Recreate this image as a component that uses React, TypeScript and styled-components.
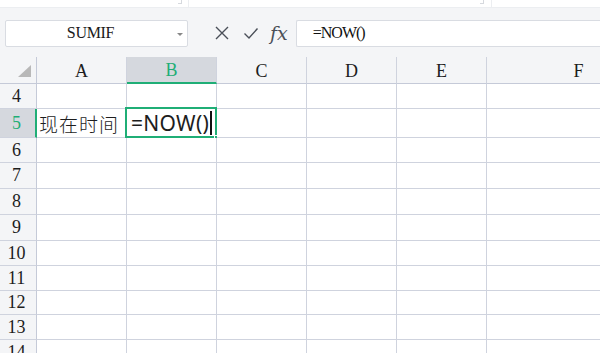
import styled, { createGlobalStyle, css } from 'styled-components';

const GREEN = '#1fae76';
const GRID = '#cfd3de';
const HEAD_BG = '#f4f5f7';
const HEAD_SEL = '#d5d8de';

const columns = ['A', 'B', 'C', 'D', 'E', 'F'];
const rows: { n: number; h: number }[] = [
  { n: 4, h: 25 },
  { n: 5, h: 29 },
  { n: 6, h: 25 },
  { n: 7, h: 26 },
  { n: 8, h: 26 },
  { n: 9, h: 26 },
  { n: 10, h: 25 },
  { n: 11, h: 25 },
  { n: 12, h: 24 },
  { n: 13, h: 25 },
  { n: 14, h: 25 },
];

const GlobalStyle = createGlobalStyle`
  html, body {
    margin: 0;
    padding: 0;
    background: #fff;
    overflow: hidden;
  }
  * { box-sizing: border-box; }
`;

const App = () => {
  return (
    <Page>
      <GlobalStyle />
      <TopStrip>
        <StripMark style={{ left: 178 }} />
        <StripLine style={{ left: 188 }} />
        <StripMark style={{ left: 480 }} />
        <StripLine style={{ left: 491 }} />
      </TopStrip>
      <Toolbar>
        <NameBox>
          <span>SUMIF</span>
          <Caret />
        </NameBox>
        <Tools>
          <svg width="16" height="16" viewBox="0 0 16 16">
            <path d="M2 2 L14 14 M14 2 L2 14" stroke="#4a4f58" strokeWidth="1.4" fill="none" />
          </svg>
          <svg width="16" height="16" viewBox="0 0 16 16">
            <path d="M1.5 8.5 L6 13 L14.5 3.5" stroke="#4a4f58" strokeWidth="1.4" fill="none" />
          </svg>
          <Fx>
            <i>f</i>
            <i>x</i>
          </Fx>
        </Tools>
        <FormulaInput>=NOW()</FormulaInput>
      </Toolbar>
      <Sheet>
        <Corner>
          <Triangle />
        </Corner>
        {columns.map((c) => (
          <ColHead key={c} $active={c === 'B'}>
            {c}
          </ColHead>
        ))}
        {rows.map((r) => (
          <Row key={r.n} $h={r.h}>
            <RowHead $active={r.n === 5}>{r.n}</RowHead>
            {columns.map((c) => (
              <Cell key={c}>
                {r.n === 5 && c === 'A' && <CnText>现在时间</CnText>}
                {r.n === 5 && c === 'B' && (
                  <>
                    <EditText>
                      =NOW()
                      <Cursor />
                    </EditText>
                    <Selection>
                      <Handle />
                    </Selection>
                  </>
                )}
              </Cell>
            ))}
          </Row>
        ))}
      </Sheet>
    </Page>
  );
};

export default App;

const Page = styled.div`
  width: 600px;
  height: 353px;
  overflow: hidden;
  background: #fff;
`;

const TopStrip = styled.div`
  position: relative;
  height: 8px;
  background: #fff;
  border-bottom: 1px solid #eceef1;
`;

const StripMark = styled.div`
  position: absolute;
  top: 0;
  width: 4px;
  height: 4px;
  border-right: 1px solid #d6d9de;
  border-bottom: 1px solid #d6d9de;
`;

const StripLine = styled.div`
  position: absolute;
  top: 0;
  width: 1px;
  height: 7px;
  background: #eceef1;
`;

const Toolbar = styled.div`
  display: flex;
  align-items: center;
  height: 49px;
  padding: 0 0 0 5px;
  background: ${HEAD_BG};
`;

const NameBox = styled.div`
  position: relative;
  display: flex;
  align-items: center;
  justify-content: center;
  width: 183px;
  height: 27px;
  margin-top: 1px;
  padding-right: 12px;
  background: #fff;
  border: 1px solid #d9dce2;
  border-radius: 2px;
  font-family: 'Liberation Serif', serif;
  font-size: 16px;
  letter-spacing: -0.3px;
  color: #1a1a1a;
`;

const Caret = styled.div`
  position: absolute;
  right: 4px;
  top: 12px;
  width: 0;
  height: 0;
  border-left: 3px solid transparent;
  border-right: 3px solid transparent;
  border-top: 3px solid #888;
`;

const Tools = styled.div`
  display: flex;
  align-items: center;
  gap: 13px;
  margin-left: 26px;
  margin-top: 1px;
`;

const Fx = styled.span`
  font-family: 'DejaVu Serif', 'Liberation Serif', serif;
  font-size: 19px;
  color: #4a4f58;
  letter-spacing: 0;
  margin-left: -2px;
  i { font-style: italic; }
`;

const FormulaInput = styled.div`
  display: flex;
  align-items: center;
  flex: 1;
  height: 27px;
  margin-left: 8px;
  margin-top: 1px;
  padding-left: 16px;
  background: #fff;
  border: 1px solid #d9dce2;
  border-right: none;
  border-radius: 2px 0 0 2px;
  font-family: 'Liberation Serif', serif;
  font-size: 16px;
  color: #111;
  letter-spacing: -1px;
`;

const Sheet = styled.div`
  display: grid;
  grid-template-columns: 37px 90px 90px 90px 90px 90px 184px;
  font-family: 'Liberation Serif', serif;
`;

const Row = styled.div<{ $h: number }>`
  display: contents;
  & > div {
    height: ${({ $h }) => $h}px;
  }
`;

const headBase = css`
  display: flex;
  align-items: center;
  justify-content: center;
  background: ${HEAD_BG};
  font-size: 18px;
  color: #1d1d1d;
  border-bottom: 1px solid ${GRID};
  border-right: 1px solid ${GRID};
`;

const Corner = styled.div`
  ${headBase};
  height: 27px;
  position: relative;
  border-right: 1px solid #c5cad8;
  border-bottom: 1px solid #c5cad8;
`;

const Triangle = styled.div`
  position: absolute;
  left: 18px;
  top: 8px;
  width: 0;
  height: 0;
  border-left: 13px solid transparent;
  border-bottom: 12px solid #b8b8b8;
`;

const ColHead = styled.div<{ $active?: boolean }>`
  ${headBase};
  height: 27px;
  padding-top: 2px;
  border-bottom: 1px solid #c5cad8;
  ${({ $active }) =>
    $active &&
    css`
      background: ${HEAD_SEL};
      color: ${GREEN};
      border-bottom: 2px solid ${GREEN};
    `}
`;

const RowHead = styled.div<{ $active?: boolean }>`
  ${headBase};
  padding-right: 3px;
  border-right: 1px solid #c5cad8;
  ${({ $active }) =>
    $active &&
    css`
      background: ${HEAD_SEL};
      color: ${GREEN};
      border-right: 2px solid ${GREEN};
      padding-right: 2px;
    `}
`;

const Cell = styled.div`
  position: relative;
  display: flex;
  align-items: center;
  border-right: 1px solid ${GRID};
  border-bottom: 1px solid ${GRID};
  background: #fff;
`;

const CnText = styled.span`
  padding-left: 2px;
  font-family: 'Noto Sans CJK SC', sans-serif;
  font-size: 19px;
  font-weight: 300;
  letter-spacing: 1px;
  color: #1d1d1d;
  white-space: nowrap;
`;

const EditText = styled.span`
  display: flex;
  align-items: center;
  padding-left: 4px;
  font-family: 'Noto Sans', 'Liberation Sans', sans-serif;
  font-size: 21px;
  color: #1d1d1d;
  letter-spacing: 0.3px;
`;

const Cursor = styled.span`
  display: inline-block;
  width: 1.5px;
  height: 24px;
  margin-left: 1px;
  background: #111;
`;

const Selection = styled.div`
  position: absolute;
  left: -2px;
  top: -2px;
  right: -1px;
  bottom: -1px;
  border: 2px solid ${GREEN};
  pointer-events: none;
`;

const Handle = styled.div`
  position: absolute;
  right: -4px;
  bottom: -4px;
  width: 5px;
  height: 5px;
  background: ${GREEN};
  border: 1px solid #fff;
`;
